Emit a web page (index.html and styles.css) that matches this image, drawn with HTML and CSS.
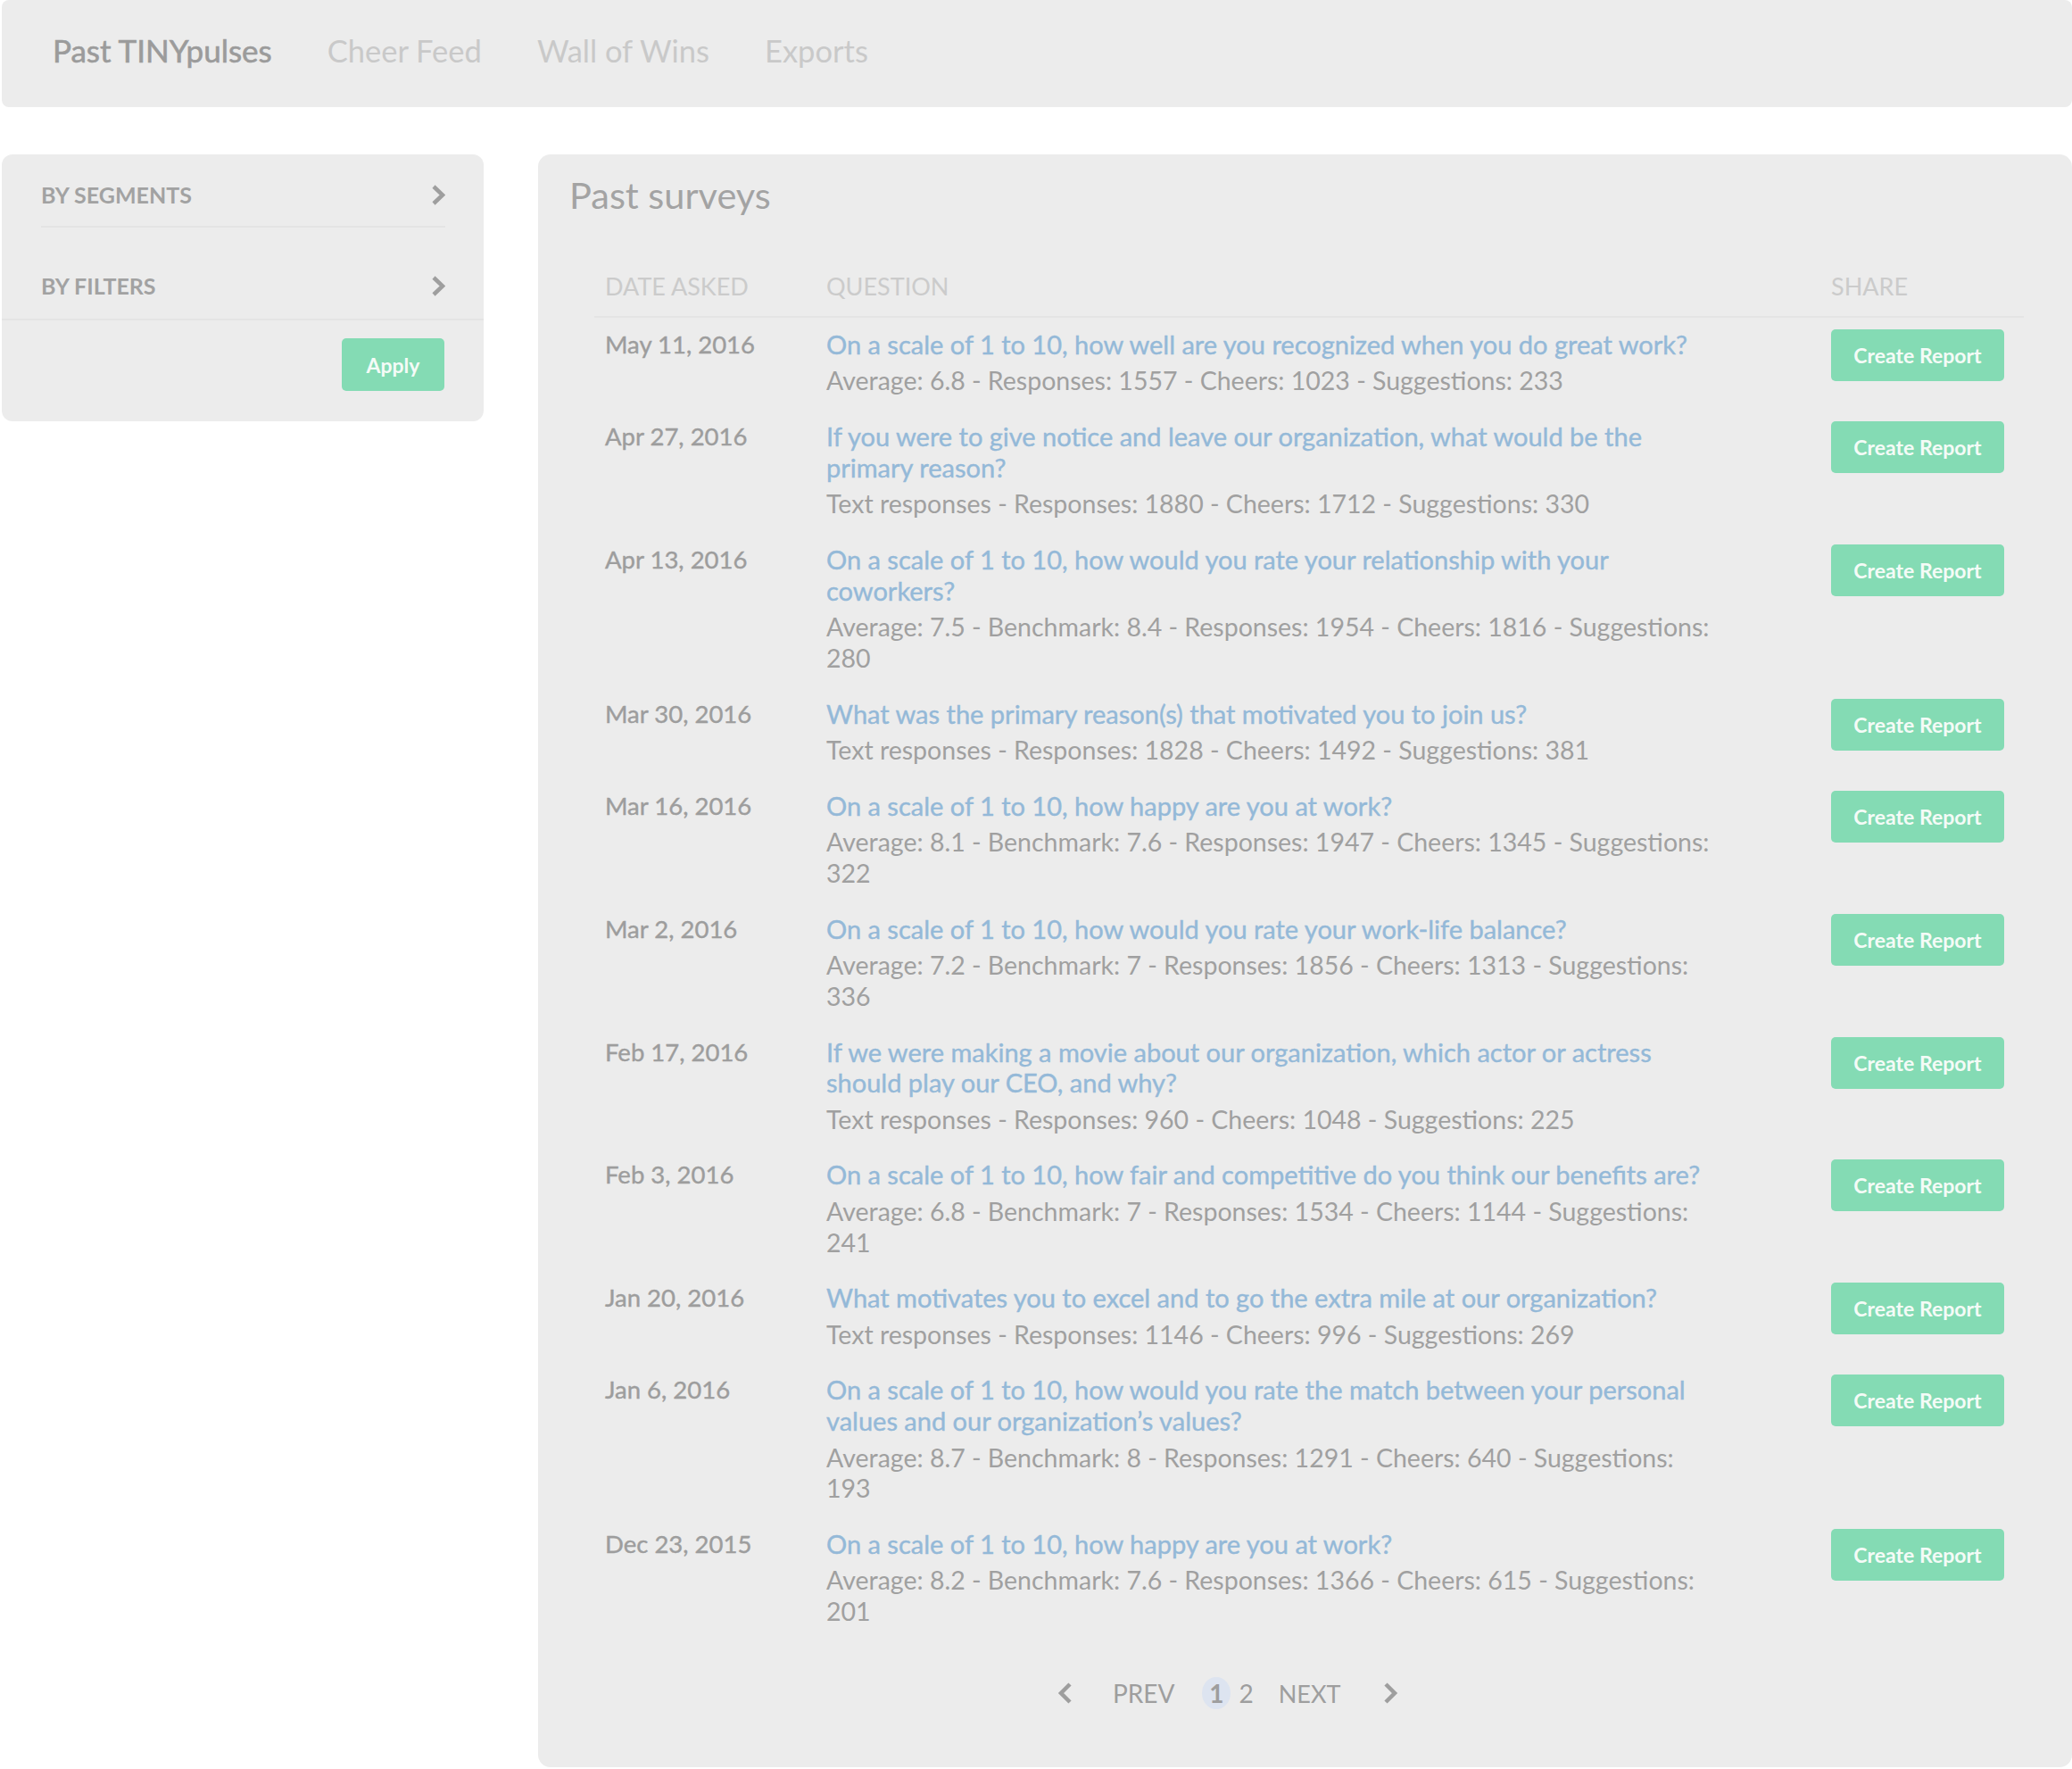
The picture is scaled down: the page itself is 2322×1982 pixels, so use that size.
FILE: index.html
```html
<!DOCTYPE html>
<html lang="en">
<head>
<meta charset="utf-8">
<title>Past TINYpulses</title>
<link rel="stylesheet" href="styles.css">
</head>
<body>
<nav class="topnav">
  <a class="nav-item active" href="#">Past TINYpulses</a>
  <a class="nav-item" href="#">Cheer Feed</a>
  <a class="nav-item" href="#">Wall of Wins</a>
  <a class="nav-item" href="#">Exports</a>
</nav>

<div class="layout">
  <aside class="sidebar">
    <div class="filters">
      <div class="filter first">
        <span class="filter-label">BY SEGMENTS</span>
        <svg class="chev" width="16" height="25" viewBox="0 0 16 25"><polyline points="3,3 13,12.5 3,22" /></svg>
      </div>
      <div class="filter second">
        <span class="filter-label">BY FILTERS</span>
        <svg class="chev" width="16" height="25" viewBox="0 0 16 25"><polyline points="3,3 13,12.5 3,22" /></svg>
      </div>
    </div>
    <div class="apply-wrap">
      <button class="btn apply">Apply</button>
    </div>
  </aside>

  <main class="main">
    <h1 class="title">Past surveys</h1>
    <div class="surveys">
      <div class="row head">
        <div class="cell">DATE ASKED</div>
        <div class="cell q">QUESTION</div>
        <div class="cell">SHARE</div>
      </div>

      <div class="row">
        <div class="cell date">May 11, 2016</div>
        <div class="cell q"><a class="question" href="#">On a scale of 1 to 10, how well are you recognized when you do great work?</a><div class="meta">Average: 6.8 - Responses: 1557 - Cheers: 1023 - Suggestions: 233</div></div>
        <div class="cell"><button class="btn report">Create Report</button></div>
      </div>
      <div class="row">
        <div class="cell date">Apr 27, 2016</div>
        <div class="cell q"><a class="question" href="#">If you were to give notice and leave our organization, what would be the primary reason?</a><div class="meta">Text responses - Responses: 1880 - Cheers: 1712 - Suggestions: 330</div></div>
        <div class="cell"><button class="btn report">Create Report</button></div>
      </div>
      <div class="row">
        <div class="cell date">Apr 13, 2016</div>
        <div class="cell q"><a class="question" href="#">On a scale of 1 to 10, how would you rate your relationship with your coworkers?</a><div class="meta">Average: 7.5 - Benchmark: 8.4 - Responses: 1954 - Cheers: 1816 - Suggestions: 280</div></div>
        <div class="cell"><button class="btn report">Create Report</button></div>
      </div>
      <div class="row">
        <div class="cell date">Mar 30, 2016</div>
        <div class="cell q"><a class="question" href="#">What was the primary reason(s) that motivated you to join us?</a><div class="meta">Text responses - Responses: 1828 - Cheers: 1492 - Suggestions: 381</div></div>
        <div class="cell"><button class="btn report">Create Report</button></div>
      </div>
      <div class="row">
        <div class="cell date">Mar 16, 2016</div>
        <div class="cell q"><a class="question" href="#">On a scale of 1 to 10, how happy are you at work?</a><div class="meta">Average: 8.1 - Benchmark: 7.6 - Responses: 1947 - Cheers: 1345 - Suggestions: 322</div></div>
        <div class="cell"><button class="btn report">Create Report</button></div>
      </div>
      <div class="row">
        <div class="cell date">Mar 2, 2016</div>
        <div class="cell q"><a class="question" href="#">On a scale of 1 to 10, how would you rate your work-life balance?</a><div class="meta">Average: 7.2 - Benchmark: 7 - Responses: 1856 - Cheers: 1313 - Suggestions: 336</div></div>
        <div class="cell"><button class="btn report">Create Report</button></div>
      </div>
      <div class="row">
        <div class="cell date">Feb 17, 2016</div>
        <div class="cell q"><a class="question" href="#">If we were making a movie about our organization, which actor or actress should play our CEO, and why?</a><div class="meta">Text responses - Responses: 960 - Cheers: 1048 - Suggestions: 225</div></div>
        <div class="cell"><button class="btn report">Create Report</button></div>
      </div>
      <div class="row">
        <div class="cell date">Feb 3, 2016</div>
        <div class="cell q"><a class="question" href="#">On a scale of 1 to 10, how fair and competitive do you think our benefits are?</a><div class="meta">Average: 6.8 - Benchmark: 7 - Responses: 1534 - Cheers: 1144 - Suggestions: 241</div></div>
        <div class="cell"><button class="btn report">Create Report</button></div>
      </div>
      <div class="row">
        <div class="cell date">Jan 20, 2016</div>
        <div class="cell q"><a class="question" href="#">What motivates you to excel and to go the extra mile at our organization?</a><div class="meta">Text responses - Responses: 1146 - Cheers: 996 - Suggestions: 269</div></div>
        <div class="cell"><button class="btn report">Create Report</button></div>
      </div>
      <div class="row">
        <div class="cell date">Jan 6, 2016</div>
        <div class="cell q"><a class="question" href="#">On a scale of 1 to 10, how would you rate the match between your personal values and our organization’s values?</a><div class="meta">Average: 8.7 - Benchmark: 8 - Responses: 1291 - Cheers: 640 - Suggestions: 193</div></div>
        <div class="cell"><button class="btn report">Create Report</button></div>
      </div>
      <div class="row">
        <div class="cell date">Dec 23, 2015</div>
        <div class="cell q"><a class="question" href="#">On a scale of 1 to 10, how happy are you at work?</a><div class="meta">Average: 8.2 - Benchmark: 7.6 - Responses: 1366 - Cheers: 615 - Suggestions: 201</div></div>
        <div class="cell"><button class="btn report">Create Report</button></div>
      </div>
    </div>

    <div class="pager">
      <svg class="pchev" width="17" height="26" viewBox="0 0 17 26"><polyline points="14,3 4,13 14,23" /></svg>
      <span class="pword prev">PREV</span>
      <span class="page current">1</span>
      <span class="page other">2</span>
      <span class="pword next">NEXT</span>
      <svg class="pchev" width="17" height="26" viewBox="0 0 17 26"><polyline points="3,3 13,13 3,23" /></svg>
    </div>
  </main>
</div>
</body>
</html>
```
FILE: styles.css
```css
* { box-sizing: border-box; }

body {
  margin: 0;
  padding: 0 0 0 2px;
  background: #ffffff;
  font-family: Lato, "Noto Sans", sans-serif;
  color: #9e9e9e;
}

.topnav {
  height: 120px;
  background: #ececec;
  border-radius: 8px;
  display: flex;
  align-items: center;
  gap: 62px;
  padding: 0 0 8px 57px;
}

.nav-item {
  font-size: 34.5px;
  color: #c9c9c9;
  text-decoration: none;
}

.nav-item.active {
  font-size: 35px;
  color: #9b9b9b;
  -webkit-text-stroke: 0.6px #9b9b9b;
}

.layout {
  display: flex;
  align-items: flex-start;
  gap: 61px;
  margin-top: 53px;
}

.sidebar {
  width: 540px;
  flex: none;
  background: #ececec;
  border-radius: 12px;
}

.filters {
  border-bottom: 2px solid #e4e4e4;
}

.filter {
  display: flex;
  justify-content: space-between;
  align-items: center;
  margin: 0 43px 0 44px;
  height: 82px;
  padding-top: 10px;
}

.filter.first {
  border-bottom: 2px solid #e4e4e4;
}

.filter.second {
  height: 102px;
  padding-top: 28px;
}

.filter-label {
  font-size: 25px;
  font-weight: 700;
  color: #a2a2a2;
}

.chev polyline,
.pchev polyline {
  fill: none;
  stroke: #9e9e9e;
  stroke-width: 4.5;
}

.apply-wrap {
  display: flex;
  justify-content: flex-end;
  padding: 20px 44px 34px 0;
}

.btn {
  border: none;
  background: #84dbb4;
  color: #f4fbf7;
  font-family: Lato, "Noto Sans", sans-serif;
  font-weight: 700;
  border-radius: 5px;
  cursor: pointer;
}

.apply {
  width: 115px;
  height: 59px;
  font-size: 23px;
}

.main {
  flex: 1;
  background: #ececec;
  border-radius: 14px;
  padding: 20px 0 0 35px;
  min-height: 1807px;
}

.title {
  margin: 0;
  font-size: 41.5px;
  line-height: 50px;
  font-weight: 400;
  color: #a3a3a3;
}

.surveys {
  margin: 60px 54px 0 28px;
}

.row {
  display: grid;
  grid-template-columns: 248px 1fr 228px;
  padding: 13px 0 15px;
  font-size: 28.5px;
  line-height: 34.8px;
}

.cell {
  padding-left: 12px;
}

.cell.q {
  padding-right: 113px;
}

.row.head {
  padding: 0 0 16px;
  border-bottom: 2px solid #e4e4e4;
  color: #cbcbcb;
  font-size: 27px;
  line-height: 35px;
}

.date {
  font-size: 27.5px;
  color: #9d9d9d;
  -webkit-text-stroke: 0.4px #9d9d9d;
}

.question {
  font-size: 29px;
  color: #94b9d8;
  text-decoration: none;
  -webkit-text-stroke: 0.4px #94b9d8;
}

.meta {
  margin-top: 5.5px;
  color: #a0a0a0;
}

.report {
  display: block;
  width: 194px;
  height: 58px;
  font-size: 23px;
}

.pager {
  display: flex;
  align-items: center;
  padding-left: 547px;
  margin-top: 41px;
  font-size: 28px;
  line-height: 35px;
  color: #9e9e9e;
}

.pchev {
  display: block;
}

.pword.prev {
  margin: 0 31px 0 45px;
}

.pword.next {
  margin: 0 48px 0 28px;
  font-size: 27px;
}

.page.current {
  display: inline-flex;
  justify-content: center;
  align-items: center;
  width: 32px;
  height: 36px;
  background: #dde4f0;
  border-radius: 50%;
  font-weight: 700;
}

.page.other {
  margin-left: 9px;
}
```
